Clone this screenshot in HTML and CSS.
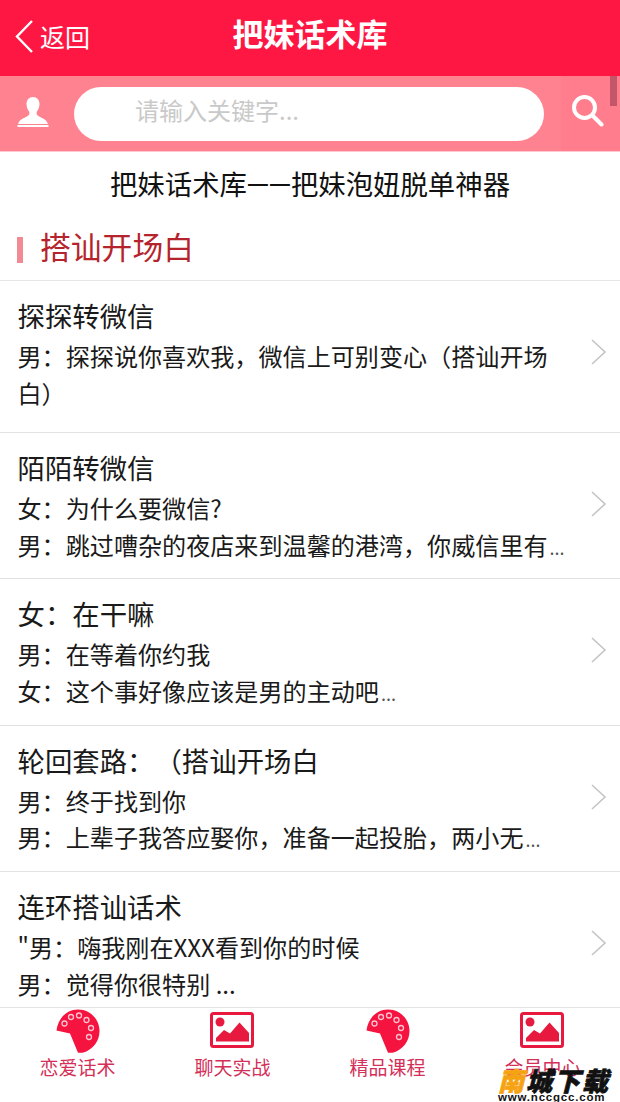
FILE: index.html
```html
<!DOCTYPE html>
<html lang="zh-CN">
<head>
    <meta charset="UTF-8">
    <meta name="viewport" content="width=device-width, initial-scale=1.0">
    <title>把妹话术库</title>
    <link rel="stylesheet" href="styles.css">
</head>
<body>
    <div class="page">
        <div class="scroll-thumb"></div>

        <header class="topbar">
            <a class="back">
                <svg class="back-icon" viewBox="0 0 18 33"><path d="M17 1 2 16.500 17 32" fill="none" stroke="#fff" stroke-width="2.400"/></svg>
                <span>返回</span>
            </a>
            <h1>把妹话术库</h1>
        </header>

        <div class="searchbar">
            <svg class="user-icon" viewBox="0 0 32 32">
                <path d="M16 0c-4 0-6.500 3-6.500 7 0 3 1.200 5.800 2.800 7.800.5 2-.3 3.700-2.300 4.800-3 1.600-7 2.400-9 7.400h30c-2-5-6-5.800-9-7.400-2-1.100-2.800-2.800-2.300-4.800 1.600-2 2.800-4.800 2.800-7.800 0-4-2.500-7-6.500-7z" fill="#fff"/>
                <rect x="0.500" y="28" width="31" height="2" fill="#fff"/>
            </svg>
            <div class="search-input">请输入关键字...</div>
            <div class="search-btn">
                <svg class="search-icon" viewBox="0 0 32 34">
                    <circle cx="12.500" cy="12.500" r="10.500" fill="none" stroke="#fff" stroke-width="4"/>
                    <path d="M20.500 20.500 29.500 29.500" stroke="#fff" stroke-width="4" stroke-linecap="round"/>
                </svg>
            </div>
        </div>

        <main class="content">
            <p class="slogan">把妹话术库<span class="dash">－－</span>把妹泡妞脱单神器</p>
            <h2 class="section-title">搭讪开场白</h2>

            <ul class="list">
                <li class="item item-wrapped">
                    <div class="item-text">
                        <h3>探探转微信</h3>
                        <p class="wrap">男：探探说你喜欢我，微信上可别变心（搭讪开场白）</p>
                    </div>
                    <svg class="chevron" viewBox="0 0 16 26"><path d="M1 1l13 12L1 25" fill="none" stroke="#c4c4c4" stroke-width="1.600"/></svg>
                </li>
                <li class="item">
                    <div class="item-text">
                        <h3>陌陌转微信</h3>
                        <p>女：为什么要微信?</p>
                        <p>男：跳过嘈杂的夜店来到温馨的港湾，你威信里有<span class="dots">...</span></p>
                    </div>
                    <svg class="chevron" viewBox="0 0 16 26"><path d="M1 1l13 12L1 25" fill="none" stroke="#c4c4c4" stroke-width="1.600"/></svg>
                </li>
                <li class="item">
                    <div class="item-text">
                        <h3>女：在干嘛</h3>
                        <p>男：在等着你约我</p>
                        <p>女：这个事好像应该是男的主动吧<span class="dots">...</span></p>
                    </div>
                    <svg class="chevron" viewBox="0 0 16 26"><path d="M1 1l13 12L1 25" fill="none" stroke="#c4c4c4" stroke-width="1.600"/></svg>
                </li>
                <li class="item">
                    <div class="item-text">
                        <h3>轮回套路：（搭讪开场白</h3>
                        <p>男：终于找到你</p>
                        <p>男：上辈子我答应娶你，准备一起投胎，两小无<span class="dots">...</span></p>
                    </div>
                    <svg class="chevron" viewBox="0 0 16 26"><path d="M1 1l13 12L1 25" fill="none" stroke="#c4c4c4" stroke-width="1.600"/></svg>
                </li>
                <li class="item">
                    <div class="item-text">
                        <h3>连环搭讪话术</h3>
                        <p>"男：嗨我刚在XXX看到你的时候</p>
                        <p>男：觉得你很特别 ...</p>
                    </div>
                    <svg class="chevron" viewBox="0 0 16 26"><path d="M1 1l13 12L1 25" fill="none" stroke="#c4c4c4" stroke-width="1.600"/></svg>
                </li>
            </ul>
        </main>

        <nav class="tabbar">
            <a class="tab">
                <svg class="tab-palette" viewBox="0 0 44 44"><use href="#palette"/></svg>
                <span>恋爱话术</span>
            </a>
            <a class="tab">
                <svg class="tab-image" viewBox="0 0 44 36"><use href="#picture"/></svg>
                <span>聊天实战</span>
            </a>
            <a class="tab">
                <svg class="tab-palette" viewBox="0 0 44 44"><use href="#palette"/></svg>
                <span>精品课程</span>
            </a>
            <a class="tab">
                <svg class="tab-image" viewBox="0 0 44 36"><use href="#picture"/></svg>
                <span>会员中心</span>
            </a>
        </nav>

        <div class="stamp">
            <div class="stamp-name"><span class="stamp-first">南</span>城下载</div>
            <div class="stamp-url">www.nccgcc.com</div>
        </div>
    </div>

    <!-- shared tab icons -->
    <svg class="defs" width="0" height="0">
        <symbol id="palette" viewBox="0 0 44 44">
            <path d="M0.500 21.500C2 9 11 .5 22 .5c12 0 21.500 9.500 21.500 21.500 0 10-6.500 18.500-16 21.500-2 .6-5.500.2-5.500.2L14 24.500z" fill="#f5133f"/>
            <g fill="none" stroke="#ffc4d0" stroke-width="1.300">
                <circle cx="8.500" cy="14.500" r="2.500"/>
                <circle cx="15" cy="8" r="2.500"/>
                <circle cx="23" cy="6.500" r="2.500"/>
                <circle cx="30.500" cy="11" r="2.500"/>
                <circle cx="35" cy="19" r="2.500"/>
                <circle cx="33" cy="28" r="2.500"/>
            </g>
        </symbol>
        <symbol id="picture" viewBox="0 0 44 36">
            <rect x="1.500" y="1.500" width="41" height="33" rx="2" fill="#fff" stroke="#e8193f" stroke-width="3"/>
            <circle cx="10" cy="10" r="4.500" fill="#e8193f"/>
            <path d="M6 29.500V26l8-8 6 3.500 9.500-11L39 21v8.500z" fill="#e8193f"/>
        </symbol>
    </svg>
</body>
</html>
```

FILE: styles.css
```css
* {
    margin: 0;
    padding: 0;
    box-sizing: border-box;
}

body {
    font-family: "Noto Sans CJK SC", "Liberation Sans", sans-serif;
    background: #fff;
    color: #1a1a1a;
    text-spacing-trim: space-all;
}

.page {
    position: relative;
    width: 620px;
    height: 1102px;
    display: flex;
    flex-direction: column;
    overflow: hidden;
}

.scroll-thumb {
    position: absolute;
    top: 3px;
    right: 3px;
    width: 7px;
    height: 103px;
    background: rgba(100, 30, 50, 0.4);
}

/* top bar */
.topbar {
    position: relative;
    flex: none;
    height: 76px;
    background: #ff1744;
    color: #fff;
    display: flex;
    align-items: center;
    justify-content: center;
}

.topbar h1 {
    font-size: 31px;
    font-weight: 700;
    margin-top: -11px;
}

.back {
    position: absolute;
    left: 15px;
    top: 18px;
    display: flex;
    align-items: center;
    gap: 7px;
    font-size: 25px;
    line-height: 38px;
}

.back span {
    margin-top: -1px;
}

.back-icon {
    width: 18px;
    height: 33px;
}

/* search row */
.searchbar {
    flex: none;
    height: 76px;
    background: #ff8290;
    display: flex;
    align-items: center;
    border-bottom: 1px solid #ffc9cf;
}

.user-icon {
    width: 32px;
    height: 32px;
    margin: -2px 25px 0 17px;
}

.search-input {
    width: 470px;
    height: 54px;
    padding-left: 61px;
    border-radius: 27px;
    background: #fff;
    color: #c9c9c9;
    font-size: 24px;
    line-height: 46px;
}

.search-btn {
    flex: 1;
    align-self: stretch;
    margin-left: 17px;
    background: #ff7d8d;
    display: flex;
    align-items: center;
    padding-left: 11px;
}

.search-icon {
    width: 32px;
    height: 34px;
    margin-top: -3px;
}

/* main content */
.content {
    flex: 1;
    min-height: 0;
    overflow: hidden;
}

.slogan {
    text-align: center;
    font-size: 27.400px;
    line-height: 38px;
    margin-top: 12px;
    color: #111;
}

.dash {
    letter-spacing: -5.400px;
    margin-left: -2.700px;
    margin-right: 2.700px;
}

.section-title {
    font-size: 30.800px;
    font-weight: 400;
    line-height: 44px;
    margin-top: 22px;
    margin-left: 17px;
    padding-left: 23px;
    color: #b5242c;
    position: relative;
}

.section-title::before {
    content: "";
    position: absolute;
    left: 0;
    top: 13px;
    width: 6px;
    height: 26px;
    background: #f28a94;
}

.list {
    list-style: none;
    margin-top: 12px;
    border-top: 1px solid #e6e6e6;
}

.item {
    display: flex;
    align-items: flex-start;
    height: 146.400px;
    padding: 15px 12px 0 17.500px;
    border-bottom: 1px solid #e2e2e2;
}

.item-wrapped {
    height: 152px;
}

.item-text {
    width: 548.500px;
    flex: none;
}

.item h3 {
    font-size: 27.400px;
    font-weight: 400;
    line-height: 38px;
    margin-bottom: 4px;
    color: #1a1a1a;
}

.item p {
    font-size: 24.100px;
    line-height: 36.500px;
    white-space: nowrap;
    color: #1a1a1a;
}

.item p.wrap {
    white-space: normal;
}

.dots {
    font-size: 18px;
    color: #555;
    margin-left: 2px;
}

.chevron {
    flex: none;
    width: 16px;
    height: 26px;
    margin: 43px 0 0 25px;
}

/* bottom tabs */
.tabbar {
    flex: none;
    height: 95px;
    display: grid;
    grid-template-columns: repeat(4, 155px);
    background: #fff;
    border-top: 1px solid #e4e4e4;
}

.tab {
    display: flex;
    flex-direction: column;
    align-items: center;
    color: #d42f58;
    font-size: 19px;
    line-height: 28px;
}

.tab-palette {
    width: 44px;
    height: 44px;
    margin-top: 1px;
}

.tab-image {
    width: 44px;
    height: 36px;
    margin: 4px 1px 5px 0;
}

.defs {
    position: absolute;
}

/* site stamp in the corner */
.stamp {
    position: absolute;
    left: 498px;
    top: 1068px;
    width: 112px;
}

.stamp-name {
    font-size: 26px;
    font-weight: 900;
    font-style: italic;
    line-height: 24px;
    letter-spacing: 2px;
    color: #111;
    -webkit-text-stroke: 0.700px currentColor;
    white-space: nowrap;
}

.stamp-first {
    color: #f6a313;
}

.stamp-url {
    font-family: "Liberation Sans", sans-serif;
    font-size: 11.500px;
    font-weight: 700;
    line-height: 10px;
    letter-spacing: 0.800px;
    color: #111;
    white-space: nowrap;
}
```
